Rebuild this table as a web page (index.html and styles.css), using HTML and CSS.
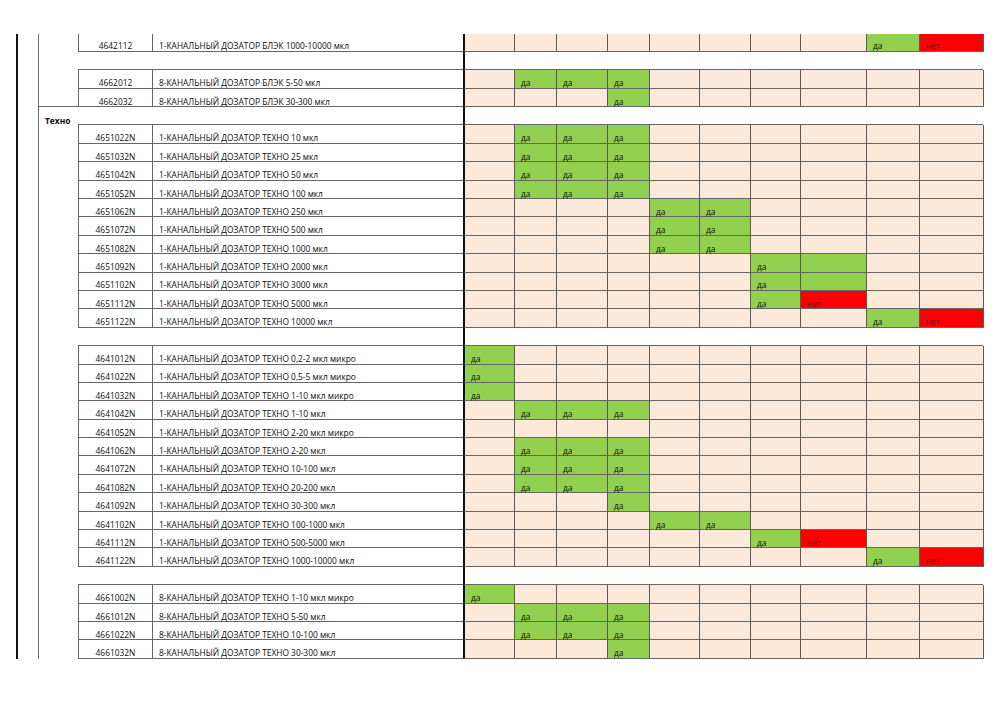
FILE: index.html
```html
<!DOCTYPE html>
<html lang="ru">
<head>
<meta charset="utf-8">
<title>Дозаторы</title>
<link rel="stylesheet" href="styles.css">
</head>
<body>
<div class="sheet">
  <div class="table">
    <div class="row"><div class="g"></div><div class="code">4642112</div><div class="name">1-КАНАЛЬНЫЙ ДОЗАТОР БЛЭК 1000-10000 мкл</div><div class="c"></div><div class="c"></div><div class="c"></div><div class="c"></div><div class="c"></div><div class="c"></div><div class="c"></div><div class="c"></div><div class="c y">да</div><div class="c n">нет</div></div>
    <div class="row gap"><div class="g"></div><div class="code"></div><div class="name"></div><div class="blank"></div></div>
    <div class="row"><div class="g"></div><div class="code">4662012</div><div class="name">8-КАНАЛЬНЫЙ ДОЗАТОР БЛЭК 5-50 мкл</div><div class="c"></div><div class="c y">да</div><div class="c y">да</div><div class="c y">да</div><div class="c"></div><div class="c"></div><div class="c"></div><div class="c"></div><div class="c"></div><div class="c"></div></div>
    <div class="row end"><div class="g"></div><div class="code">4662032</div><div class="name">8-КАНАЛЬНЫЙ ДОЗАТОР БЛЭК 30-300 мкл</div><div class="c"></div><div class="c"></div><div class="c"></div><div class="c y">да</div><div class="c"></div><div class="c"></div><div class="c"></div><div class="c"></div><div class="c"></div><div class="c"></div></div>
    <div class="row gap section"><div class="g">Техно</div><div class="code"></div><div class="name"></div><div class="blank"></div></div>
    <div class="row"><div class="g"></div><div class="code">4651022N</div><div class="name">1-КАНАЛЬНЫЙ ДОЗАТОР ТЕХНО 10 мкл</div><div class="c"></div><div class="c y">да</div><div class="c y">да</div><div class="c y">да</div><div class="c"></div><div class="c"></div><div class="c"></div><div class="c"></div><div class="c"></div><div class="c"></div></div>
    <div class="row"><div class="g"></div><div class="code">4651032N</div><div class="name">1-КАНАЛЬНЫЙ ДОЗАТОР ТЕХНО 25 мкл</div><div class="c"></div><div class="c y">да</div><div class="c y">да</div><div class="c y">да</div><div class="c"></div><div class="c"></div><div class="c"></div><div class="c"></div><div class="c"></div><div class="c"></div></div>
    <div class="row"><div class="g"></div><div class="code">4651042N</div><div class="name">1-КАНАЛЬНЫЙ ДОЗАТОР ТЕХНО 50 мкл</div><div class="c"></div><div class="c y">да</div><div class="c y">да</div><div class="c y">да</div><div class="c"></div><div class="c"></div><div class="c"></div><div class="c"></div><div class="c"></div><div class="c"></div></div>
    <div class="row"><div class="g"></div><div class="code">4651052N</div><div class="name">1-КАНАЛЬНЫЙ ДОЗАТОР ТЕХНО 100 мкл</div><div class="c"></div><div class="c y">да</div><div class="c y">да</div><div class="c y">да</div><div class="c"></div><div class="c"></div><div class="c"></div><div class="c"></div><div class="c"></div><div class="c"></div></div>
    <div class="row"><div class="g"></div><div class="code">4651062N</div><div class="name">1-КАНАЛЬНЫЙ ДОЗАТОР ТЕХНО 250 мкл</div><div class="c"></div><div class="c"></div><div class="c"></div><div class="c"></div><div class="c y">да</div><div class="c y">да</div><div class="c"></div><div class="c"></div><div class="c"></div><div class="c"></div></div>
    <div class="row"><div class="g"></div><div class="code">4651072N</div><div class="name">1-КАНАЛЬНЫЙ ДОЗАТОР ТЕХНО 500 мкл</div><div class="c"></div><div class="c"></div><div class="c"></div><div class="c"></div><div class="c y">да</div><div class="c y">да</div><div class="c"></div><div class="c"></div><div class="c"></div><div class="c"></div></div>
    <div class="row"><div class="g"></div><div class="code">4651082N</div><div class="name">1-КАНАЛЬНЫЙ ДОЗАТОР ТЕХНО 1000 мкл</div><div class="c"></div><div class="c"></div><div class="c"></div><div class="c"></div><div class="c y">да</div><div class="c y">да</div><div class="c"></div><div class="c"></div><div class="c"></div><div class="c"></div></div>
    <div class="row"><div class="g"></div><div class="code">4651092N</div><div class="name">1-КАНАЛЬНЫЙ ДОЗАТОР ТЕХНО 2000 мкл</div><div class="c"></div><div class="c"></div><div class="c"></div><div class="c"></div><div class="c"></div><div class="c"></div><div class="c y">да</div><div class="c y"></div><div class="c"></div><div class="c"></div></div>
    <div class="row"><div class="g"></div><div class="code">4651102N</div><div class="name">1-КАНАЛЬНЫЙ ДОЗАТОР ТЕХНО 3000 мкл</div><div class="c"></div><div class="c"></div><div class="c"></div><div class="c"></div><div class="c"></div><div class="c"></div><div class="c y">да</div><div class="c y"></div><div class="c"></div><div class="c"></div></div>
    <div class="row"><div class="g"></div><div class="code">4651112N</div><div class="name">1-КАНАЛЬНЫЙ ДОЗАТОР ТЕХНО 5000 мкл</div><div class="c"></div><div class="c"></div><div class="c"></div><div class="c"></div><div class="c"></div><div class="c"></div><div class="c y">да</div><div class="c n">нет</div><div class="c"></div><div class="c"></div></div>
    <div class="row"><div class="g"></div><div class="code">4651122N</div><div class="name">1-КАНАЛЬНЫЙ ДОЗАТОР ТЕХНО 10000 мкл</div><div class="c"></div><div class="c"></div><div class="c"></div><div class="c"></div><div class="c"></div><div class="c"></div><div class="c"></div><div class="c"></div><div class="c y">да</div><div class="c n">нет</div></div>
    <div class="row gap"><div class="g"></div><div class="code"></div><div class="name"></div><div class="blank"></div></div>
    <div class="row"><div class="g"></div><div class="code">4641012N</div><div class="name">1-КАНАЛЬНЫЙ ДОЗАТОР ТЕХНО 0,2-2 мкл микро</div><div class="c y">да</div><div class="c"></div><div class="c"></div><div class="c"></div><div class="c"></div><div class="c"></div><div class="c"></div><div class="c"></div><div class="c"></div><div class="c"></div></div>
    <div class="row"><div class="g"></div><div class="code">4641022N</div><div class="name">1-КАНАЛЬНЫЙ ДОЗАТОР ТЕХНО 0,5-5 мкл микро</div><div class="c y">да</div><div class="c"></div><div class="c"></div><div class="c"></div><div class="c"></div><div class="c"></div><div class="c"></div><div class="c"></div><div class="c"></div><div class="c"></div></div>
    <div class="row"><div class="g"></div><div class="code">4641032N</div><div class="name">1-КАНАЛЬНЫЙ ДОЗАТОР ТЕХНО 1-10 мкл микро</div><div class="c y">да</div><div class="c"></div><div class="c"></div><div class="c"></div><div class="c"></div><div class="c"></div><div class="c"></div><div class="c"></div><div class="c"></div><div class="c"></div></div>
    <div class="row"><div class="g"></div><div class="code">4641042N</div><div class="name">1-КАНАЛЬНЫЙ ДОЗАТОР ТЕХНО 1-10 мкл</div><div class="c"></div><div class="c y">да</div><div class="c y">да</div><div class="c y">да</div><div class="c"></div><div class="c"></div><div class="c"></div><div class="c"></div><div class="c"></div><div class="c"></div></div>
    <div class="row"><div class="g"></div><div class="code">4641052N</div><div class="name">1-КАНАЛЬНЫЙ ДОЗАТОР ТЕХНО 2-20 мкл микро</div><div class="c"></div><div class="c"></div><div class="c"></div><div class="c"></div><div class="c"></div><div class="c"></div><div class="c"></div><div class="c"></div><div class="c"></div><div class="c"></div></div>
    <div class="row"><div class="g"></div><div class="code">4641062N</div><div class="name">1-КАНАЛЬНЫЙ ДОЗАТОР ТЕХНО 2-20 мкл</div><div class="c"></div><div class="c y">да</div><div class="c y">да</div><div class="c y">да</div><div class="c"></div><div class="c"></div><div class="c"></div><div class="c"></div><div class="c"></div><div class="c"></div></div>
    <div class="row"><div class="g"></div><div class="code">4641072N</div><div class="name">1-КАНАЛЬНЫЙ ДОЗАТОР ТЕХНО 10-100 мкл</div><div class="c"></div><div class="c y">да</div><div class="c y">да</div><div class="c y">да</div><div class="c"></div><div class="c"></div><div class="c"></div><div class="c"></div><div class="c"></div><div class="c"></div></div>
    <div class="row"><div class="g"></div><div class="code">4641082N</div><div class="name">1-КАНАЛЬНЫЙ ДОЗАТОР ТЕХНО 20-200 мкл</div><div class="c"></div><div class="c y">да</div><div class="c y">да</div><div class="c y">да</div><div class="c"></div><div class="c"></div><div class="c"></div><div class="c"></div><div class="c"></div><div class="c"></div></div>
    <div class="row"><div class="g"></div><div class="code">4641092N</div><div class="name">1-КАНАЛЬНЫЙ ДОЗАТОР ТЕХНО 30-300 мкл</div><div class="c"></div><div class="c"></div><div class="c"></div><div class="c y">да</div><div class="c"></div><div class="c"></div><div class="c"></div><div class="c"></div><div class="c"></div><div class="c"></div></div>
    <div class="row"><div class="g"></div><div class="code">4641102N</div><div class="name">1-КАНАЛЬНЫЙ ДОЗАТОР ТЕХНО 100-1000 мкл</div><div class="c"></div><div class="c"></div><div class="c"></div><div class="c"></div><div class="c y">да</div><div class="c y">да</div><div class="c"></div><div class="c"></div><div class="c"></div><div class="c"></div></div>
    <div class="row"><div class="g"></div><div class="code">4641112N</div><div class="name">1-КАНАЛЬНЫЙ ДОЗАТОР ТЕХНО 500-5000 мкл</div><div class="c"></div><div class="c"></div><div class="c"></div><div class="c"></div><div class="c"></div><div class="c"></div><div class="c y">да</div><div class="c n">нет</div><div class="c"></div><div class="c"></div></div>
    <div class="row"><div class="g"></div><div class="code">4641122N</div><div class="name">1-КАНАЛЬНЫЙ ДОЗАТОР ТЕХНО 1000-10000 мкл</div><div class="c"></div><div class="c"></div><div class="c"></div><div class="c"></div><div class="c"></div><div class="c"></div><div class="c"></div><div class="c"></div><div class="c y">да</div><div class="c n">нет</div></div>
    <div class="row gap"><div class="g"></div><div class="code"></div><div class="name"></div><div class="blank"></div></div>
    <div class="row"><div class="g"></div><div class="code">4661002N</div><div class="name">8-КАНАЛЬНЫЙ ДОЗАТОР ТЕХНО 1-10 мкл микро</div><div class="c y">да</div><div class="c"></div><div class="c"></div><div class="c"></div><div class="c"></div><div class="c"></div><div class="c"></div><div class="c"></div><div class="c"></div><div class="c"></div></div>
    <div class="row"><div class="g"></div><div class="code">4661012N</div><div class="name">8-КАНАЛЬНЫЙ ДОЗАТОР ТЕХНО 5-50 мкл</div><div class="c"></div><div class="c y">да</div><div class="c y">да</div><div class="c y">да</div><div class="c"></div><div class="c"></div><div class="c"></div><div class="c"></div><div class="c"></div><div class="c"></div></div>
    <div class="row"><div class="g"></div><div class="code">4661022N</div><div class="name">8-КАНАЛЬНЫЙ ДОЗАТОР ТЕХНО 10-100 мкл</div><div class="c"></div><div class="c y">да</div><div class="c y">да</div><div class="c y">да</div><div class="c"></div><div class="c"></div><div class="c"></div><div class="c"></div><div class="c"></div><div class="c"></div></div>
    <div class="row"><div class="g"></div><div class="code">4661032N</div><div class="name">8-КАНАЛЬНЫЙ ДОЗАТОР ТЕХНО 30-300 мкл</div><div class="c"></div><div class="c"></div><div class="c"></div><div class="c y">да</div><div class="c"></div><div class="c"></div><div class="c"></div><div class="c"></div><div class="c"></div><div class="c"></div></div>
  </div>
</div>
</body>
</html>
```
FILE: styles.css
```css
* { box-sizing: border-box; }
html, body { margin: 0; padding: 0; background: #fff; }
body {
  font-family: "Open Sans", "Noto Sans", sans-serif;
  font-size: 8.4px;
  color: #0d0d0d;
}
.sheet {
  margin: 33.5px 0 0 16px;
  border-left: 2px solid #111;
  width: 968px;
}
.table {
  margin-left: 20px;
  border-left: 1px solid #6f6f6f;
}
.row {
  display: grid;
  grid-template-columns: 39px 74px 311px 51px 42px 51px 42px 50px 51px 50px 66px 53px 65px;
  height: 18.4px;
}
.row > div {
  display: flex;
  align-items: flex-end;
  height: 100%;
  padding-bottom: 0;
  line-height: 9.5px;
  white-space: nowrap;
}
.code, .name, .c, .blank {
  border-bottom: 1px solid #666;
}
.code {
  border-left: 1px solid #666;
  justify-content: center;
}
.name {
  border-left: 1px solid #666;
  padding-left: 6px;
}
.c {
  background: #fde9d9;
  border-left: 1px solid #5a5a5a;
  padding-left: 6px;
}
.row > .c:nth-child(4) { border-left: 2px solid #111; }
.row > .c:last-child { border-right: 1px solid #5a5a5a; }
.c.y { background: #92d050; }
.c.n { background: #ff0000; color: #800000; }
.gap .code, .gap .name { border-left: 0; }
.blank {
  grid-column: 4 / span 10;
  border-left: 2px solid #111;
  margin-right: 1px;
}
.end .g { border-bottom: 1px solid #666; }
.section .g {
  font-weight: bold;
  padding-left: 6px;
}
```
